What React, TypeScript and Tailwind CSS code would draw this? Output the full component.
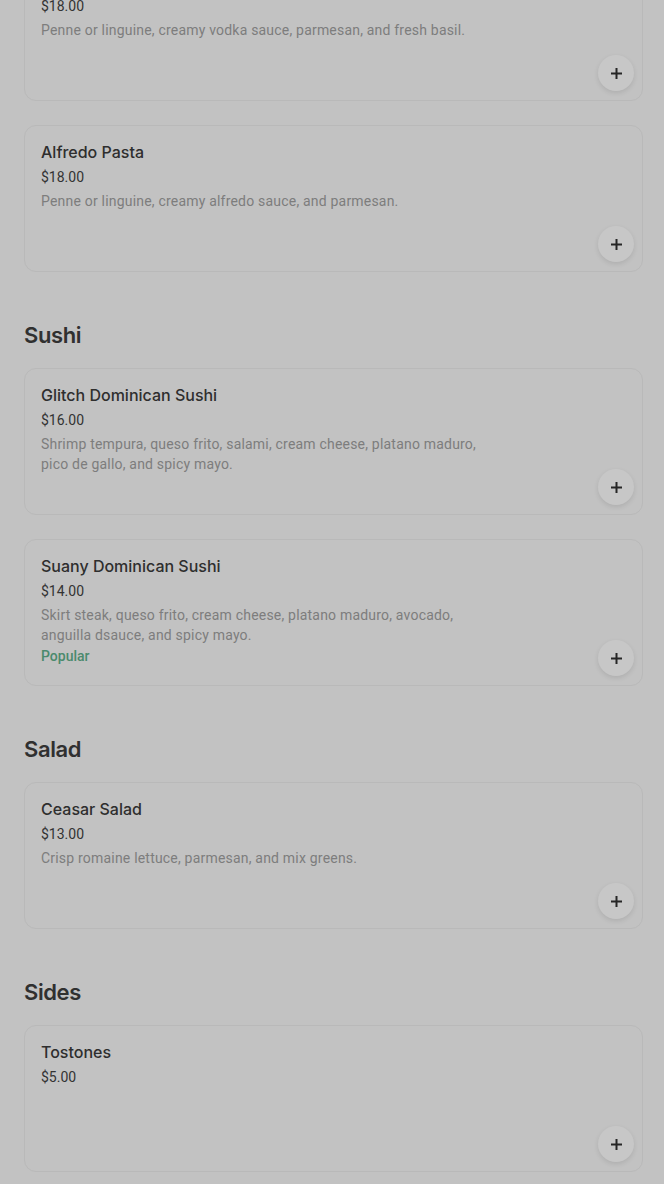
import React from 'react';

interface MenuItem {
  name: string;
  price: string;
  description?: string[];
  popular?: boolean;
}

interface Section {
  title?: string;
  items: MenuItem[];
}

const sections: Section[] = [
  {
    items: [
      {
        name: 'Vodka Pasta',
        price: '$18.00',
        description: ['Penne or linguine, creamy vodka sauce, parmesan, and fresh basil.'],
      },
      {
        name: 'Alfredo Pasta',
        price: '$18.00',
        description: ['Penne or linguine, creamy alfredo sauce, and parmesan.'],
      },
    ],
  },
  {
    title: 'Sushi',
    items: [
      {
        name: 'Glitch Dominican Sushi',
        price: '$16.00',
        description: [
          'Shrimp tempura, queso frito, salami, cream cheese, platano maduro,',
          'pico de gallo, and spicy mayo.',
        ],
      },
      {
        name: 'Suany Dominican Sushi',
        price: '$14.00',
        description: [
          'Skirt steak, queso frito, cream cheese, platano maduro, avocado,',
          'anguilla dsauce, and spicy mayo.',
        ],
        popular: true,
      },
    ],
  },
  {
    title: 'Salad',
    items: [
      {
        name: 'Ceasar Salad',
        price: '$13.00',
        description: ['Crisp romaine lettuce, parmesan, and mix greens.'],
      },
    ],
  },
  {
    title: 'Sides',
    items: [{ name: 'Tostones', price: '$5.00' }],
  },
];

const PlusIcon: React.FC = () => (
  <svg width="13" height="13" viewBox="0 0 13 13" fill="none">
    <path d="M6.5 1v11M1 6.5h11" stroke="#262626" strokeWidth="2" />
  </svg>
);

const ItemCard: React.FC<{ item: MenuItem }> = ({ item }) => (
  <div className="relative h-[147px] rounded-xl border border-[#b9b9b9] bg-[#c2c2c2] px-4 pt-4">
    <div className="text-[16px] leading-[20px] font-medium text-[#2e2e2e] font-['Inter',sans-serif]">
      {item.name}
    </div>
    <div className="mt-[5px] text-[14px] leading-[20px] text-[#333333]">{item.price}</div>
    {item.description && (
      <div className="mt-1 text-[14px] leading-[20px] tracking-[0.2px] text-[#7d7d7d]">
        {item.description.map((line, i) => (
          <div key={i}>{line}</div>
        ))}
      </div>
    )}
    {item.popular && (
      <div className="mt-px text-[14px] leading-[20px] font-medium text-[#4b8a6d]">Popular</div>
    )}
    <button className="absolute right-[8px] bottom-[9px] flex h-9 w-9 items-center justify-center rounded-full bg-[#c7c7c7] shadow-[0_2px_5px_rgba(0,0,0,0.1)]">
      <PlusIcon />
    </button>
  </div>
);

const App: React.FC = () => {
  return (
    <div className="min-h-screen overflow-hidden bg-[#c2c2c2] pl-6 pr-[21px] font-['Roboto',sans-serif]">
      <div className="-mt-[46px] pb-6">
        {sections.map((section, si) => (
          <div key={si}>
            {section.title && (
              <h2 className="mt-[47px] mb-[17px] text-[22px] leading-[32px] font-semibold tracking-[-0.4px] text-[#303030] font-['Inter',sans-serif]">
                {section.title}
              </h2>
            )}
            <div className="flex flex-col gap-6">
              {section.items.map((item) => (
                <ItemCard key={item.name} item={item} />
              ))}
            </div>
          </div>
        ))}
      </div>
    </div>
  );
};

export default App;
